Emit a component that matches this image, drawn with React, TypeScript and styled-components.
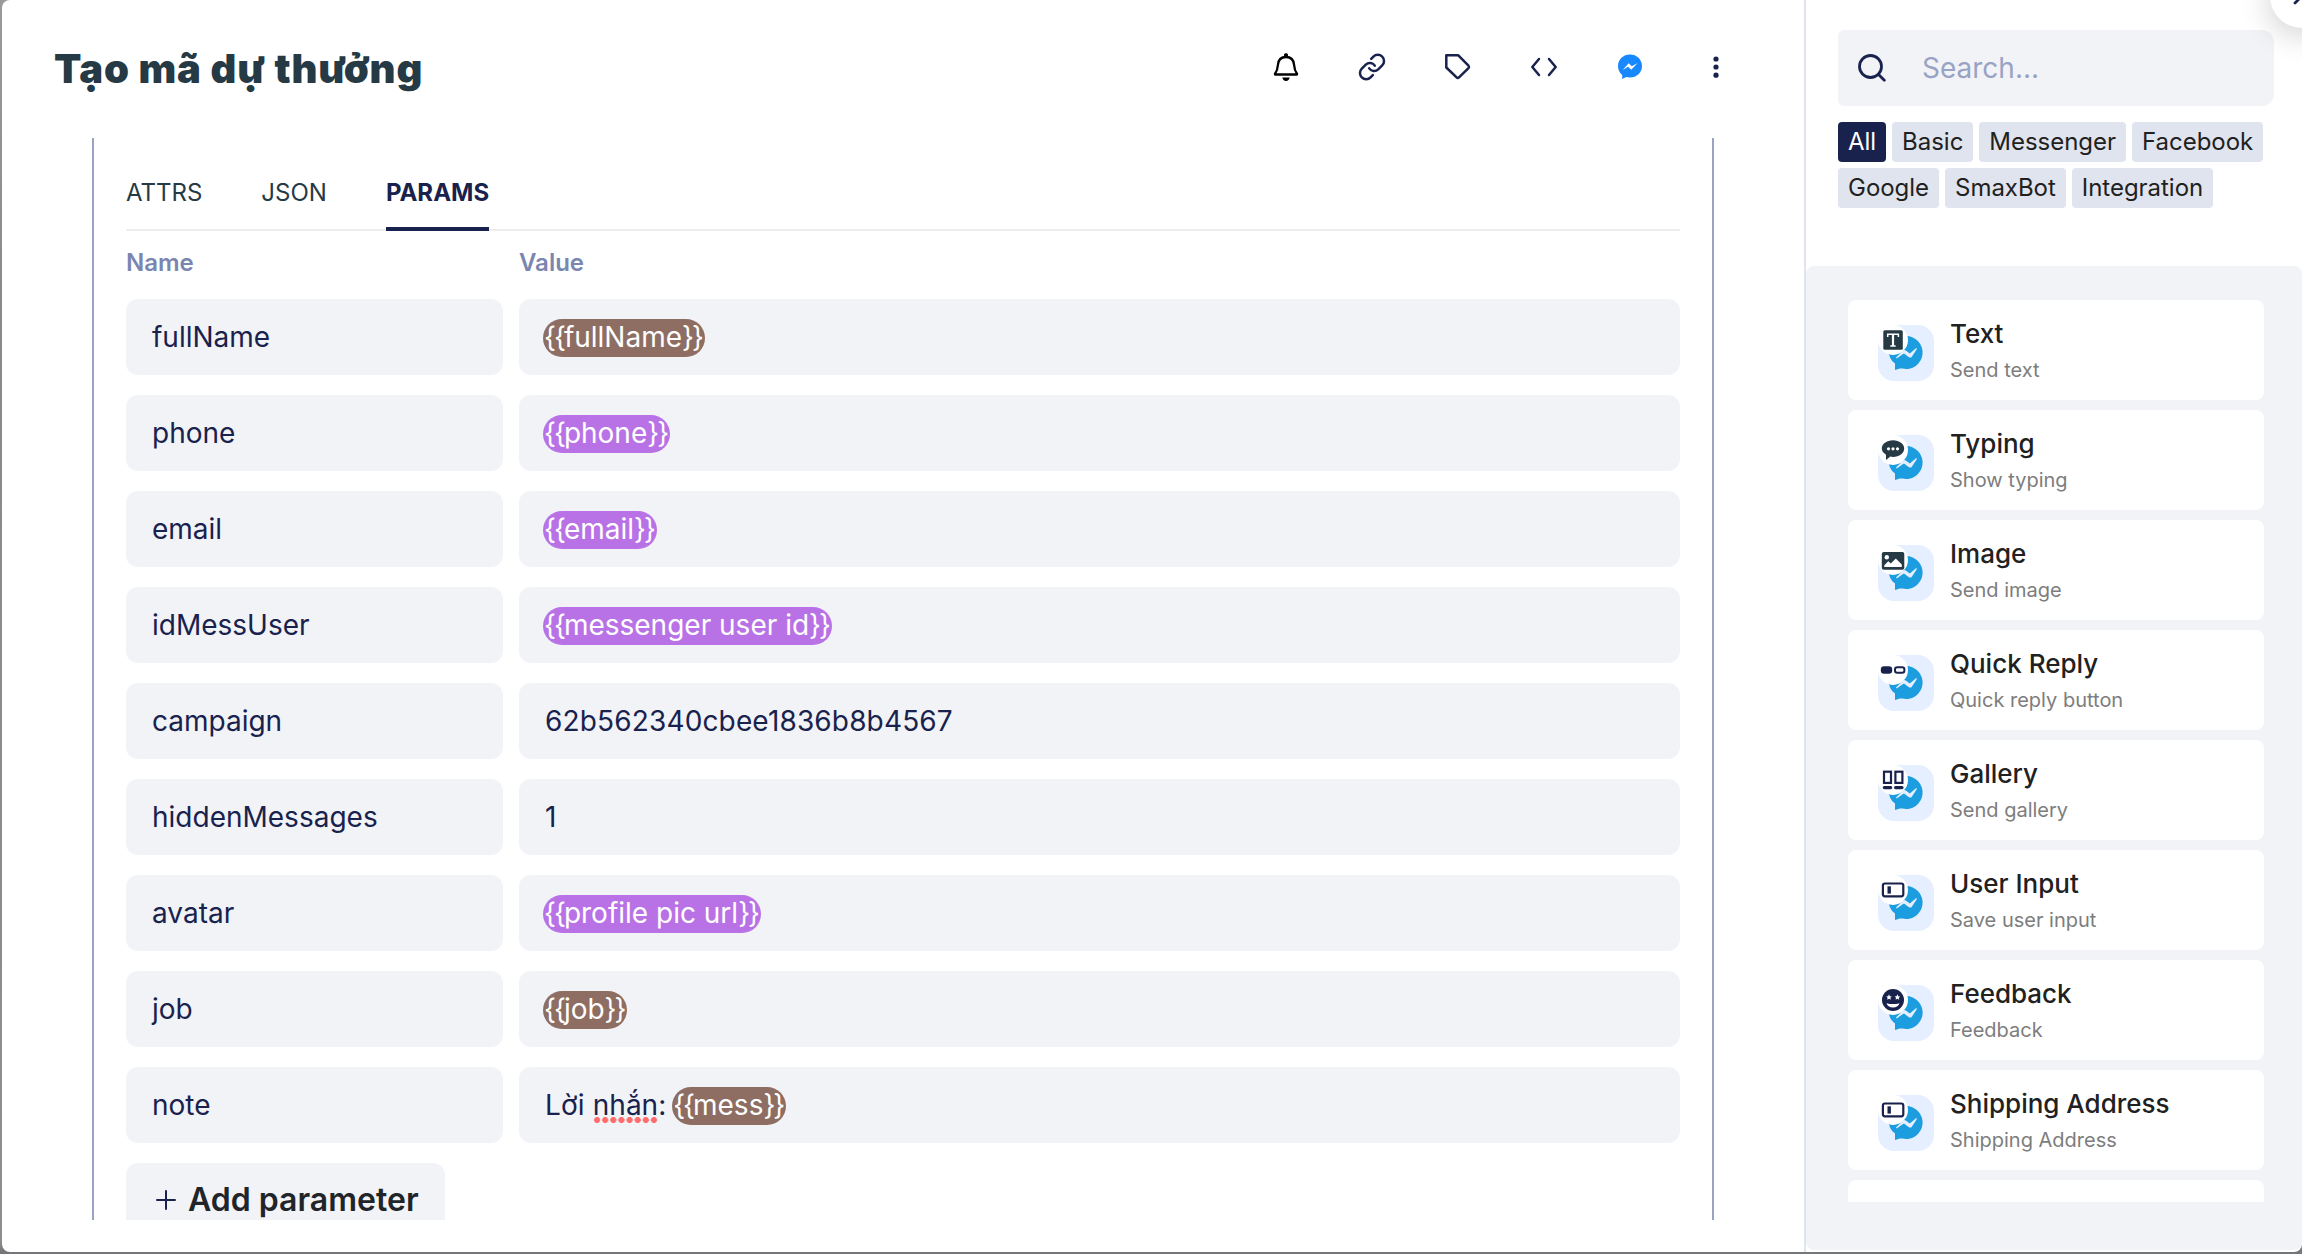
import React from 'react';
import styled, { createGlobalStyle } from 'styled-components';

const Global = createGlobalStyle`
  * { box-sizing: border-box; }
  body { margin: 0; overflow: hidden; font-family: Inter, 'Noto Sans', sans-serif; }
`;

const Backdrop = styled.div`
  width: 100vw;
  height: 1254px;
  padding: 0 0 2px 2px;
  overflow: hidden;
  background: linear-gradient(to bottom, #9a9a9c 0, #8a8a8a 300px, #8e8e8e 1240px, #757679 1252px);
`;

const Modal = styled.div`
  display: flex;
  position: relative;
  height: 1252px;
  background: #fff;
  border-radius: 8px 0 8px 8px;
  overflow: hidden;
`;

const Main = styled.main`
  width: 1802px;
  display: flex;
  flex-direction: column;
`;

const Header = styled.header`
  height: 138px;
  padding: 0 68px 4px 52px;
  display: flex;
  align-items: center;
  justify-content: space-between;
`;

const Title = styled.h1`
  margin: 3px 0 0;
  font-size: 40px;
  line-height: 48px;
  font-weight: 900;
  letter-spacing: 0.8px;
  color: #263a45;
`;

const Actions = styled.div`
  display: flex;
  gap: 46px;
`;

const Action = styled.button`
  border: 0;
  padding: 0;
  background: none;
  width: 40px;
  height: 40px;
  svg { display: block; overflow: visible; }
`;

const Editor = styled.section`
  margin-left: 90px;
  width: 1622px;
  height: 1082px;
  padding: 0 32px;
  border-left: 2px solid #99a3c4;
  border-right: 2px solid #99a3c4;
  overflow: hidden;
`;

const Tabs = styled.nav`
  height: 93px;
  display: flex;
  gap: 59px;
  border-bottom: 2px solid #ececec;
`;

const Tab = styled.div<{ $active?: boolean }>`
  height: 93px;
  padding-top: 40px;
  font-size: 24px;
  line-height: 30px;
  font-weight: ${(p) => (p.$active ? 700 : 400)};
  color: ${(p) => (p.$active ? '#18224d' : '#263a45')};
  border-bottom: ${(p) => (p.$active ? '4px solid #18224d' : '0')};
`;

const Row = styled.div`
  display: grid;
  grid-template-columns: 377px 1fr;
  column-gap: 16px;
`;

const Heads = styled(Row)`
  height: 68px;
  padding-top: 16px;
  font-size: 24px;
  line-height: 32px;
  font-weight: 600;
  color: #7a86af;
`;

const Rows = styled.div`
  display: grid;
  gap: 20px;
`;

const Field = styled.div`
  height: 76px;
  padding: 0 26px;
  display: flex;
  align-items: center;
  border-radius: 12px;
  background: #f1f3f7;
  color: #18224d;
  font-size: 28px;
  line-height: 38px;
  white-space: pre;
`;

const Code = styled.span`
  letter-spacing: 0.15px;
`;

const Chip = styled.span<{ $color: string }>`
  height: 38px;
  line-height: 36px;
  margin: 2px -2px 0;
  padding: 0 3px 0 1px;
  border-radius: 19px;
  color: #fff;
  background: ${(p) => p.$color};
`;

const Brace = styled.span`
  letter-spacing: -2px;
`;

const Misspelt = styled.span`
  height: 38px;
  background-image: radial-gradient(circle at center, #ff6b6b 2.7px, transparent 3.3px);
  background-position: 0 calc(100% - 1px);
  background-size: 8px 6px;
  background-repeat: round no-repeat;
`;

const AddButton = styled.button`
  margin-top: 20px;
  width: 319px;
  height: 76px;
  padding: 0 0 2px 30px;
  border: 0;
  border-radius: 12px;
  background: #f1f3f7;
  display: flex;
  align-items: center;
  gap: 12px;
  font: 600 32px/40px Inter, sans-serif;
  color: #212529;
  white-space: nowrap;
`;

const Sidebar = styled.aside`
  width: 498px;
  border-left: 2px solid #e0e4ee;
`;

const SidebarTop = styled.div`
  height: 266px;
  padding: 30px 28px 0 32px;
`;

const SearchBox = styled.div`
  height: 76px;
  padding-left: 20px;
  display: flex;
  align-items: center;
  gap: 36px;
  border-radius: 6px 12px 12px 6px;
  background: #f1f3f7;
  font-size: 28px;
  color: #99a3c4;
`;

const Tags = styled.div`
  margin-top: 16px;
  display: flex;
  flex-wrap: wrap;
  gap: 6px;
`;

const Tag = styled.span<{ $active?: boolean }>`
  height: 40px;
  padding: 0 10px;
  border-radius: 4px;
  font-size: 24px;
  line-height: 39px;
  letter-spacing: -0.03px;
  color: ${(p) => (p.$active ? '#fff' : '#212121')};
  background: ${(p) => (p.$active ? '#18224d' : '#e0e4ee')};
`;

const Panel = styled.div`
  height: 984px;
  padding: 34px 38px 0 42px;
  border-radius: 8px;
  background: #f1f3f7;
`;

const CardList = styled.div`
  height: 902px;
  overflow: hidden;
`;

const Card = styled.div`
  height: 100px;
  margin-bottom: 10px;
  padding: 0 30px;
  border-radius: 8px;
  background: #fff;
  display: flex;
  gap: 16px;
`;

const CardIcon = styled.svg`
  margin-top: 25px;
  width: 56px;
  height: 56px;
  flex: none;
`;

const CardTitle = styled.div`
  margin-top: 18px;
  font-size: 26px;
  line-height: 32px;
  font-weight: 500;
  color: #212121;
  white-space: nowrap;
`;

const CardHint = styled.div`
  margin-top: 8px;
  font-size: 20px;
  line-height: 24px;
  color: #7d7d7d;
`;

const CloseButton = styled.div`
  position: absolute;
  top: -36px;
  right: -32px;
  width: 64px;
  height: 64px;
  border-radius: 50%;
  background: #fff;
  box-shadow: 0 6px 32px rgba(0, 0, 0, 0.2);
  svg { position: absolute; left: 22px; top: 22px; }
`;

const NAVY = '#18224d';
const SLATE = '#263a45';
const BROWN = '#8e6e62';
const PURPLE = '#b872e6';

type Param = { name: string; text?: string; typo?: string; chip?: string; color?: string };

const params: Param[] = [
  { name: 'fullName', chip: 'fullName', color: BROWN },
  { name: 'phone', chip: 'phone', color: PURPLE },
  { name: 'email', chip: 'email', color: PURPLE },
  { name: 'idMessUser', chip: 'messenger user id', color: PURPLE },
  { name: 'campaign', text: '62b562340cbee1836b8b4567' },
  { name: 'hiddenMessages', text: '1' },
  { name: 'avatar', chip: 'profile pic url', color: PURPLE },
  { name: 'job', chip: 'job', color: BROWN },
  { name: 'note', text: 'Lời ', typo: 'nhắn', chip: 'mess', color: BROWN },
];

const Star = ({ x }: { x: number }) => (
  <path
    d="M0-2.9.85-1 2.8-.8 1.4.6 1.8 2.6 0 1.6-1.8 2.6-1.4.6-2.8-.8-.85-1z"
    transform={`translate(${x} 12.2)`}
    fill="#fff"
  />
);

const badges: Record<string, React.ReactNode> = {
  text: (
    <>
      <rect x="5.3" y="5.300" width="19.500" height="19.500" rx="1.5" fill={SLATE} />
      <path d="M9.700 12V9.300h10.700V12M15 9.300V21M12.300 21h5.400" fill="none" stroke="#fff" strokeWidth="1.500" />
      <path d="M15 9.300V21" stroke="#fff" strokeWidth="2.200" />
    </>
  ),
  typing: (
    <>
      <path d="M15 5.300c6.300 0 11.200 3.600 11.200 8.300s-4.900 8.300-11.200 8.300c-1 0-1.900-.1-2.800-.3-1.200.9-2.600 2.300-4.200 3.400v-5.300c-2.600-1.500-4.200-3.600-4.200-6.100 0-4.700 4.900-8.300 11.200-8.300z" fill={SLATE} />
      <circle cx="10.500" cy="13.800" r="1.600" fill="#fff" />
      <circle cx="15" cy="13.800" r="1.600" fill="#fff" />
      <circle cx="19.500" cy="13.800" r="1.600" fill="#fff" />
    </>
  ),
  image: (
    <>
      <rect x="3.800" y="7" width="22.500" height="17.800" rx="2" fill={SLATE} />
      <circle cx="8.800" cy="12.300" r="2.200" fill="#fff" />
      <path d="M6.300 22v-1.800l4-4 2.500 2.300 5-5 6 6V22z" fill="#fff" />
    </>
  ),
  quick: (
    <>
      <rect x="2.800" y="11.300" width="11.400" height="7.400" rx="3.200" fill={NAVY} />
      <rect x="17" y="12.300" width="9.400" height="5.400" rx="2.300" fill="#fff" stroke={NAVY} strokeWidth="2" />
    </>
  ),
  gallery: (
    <>
      <rect x="6" y="6.700" width="7" height="11.200" fill="none" stroke={NAVY} strokeWidth="2.200" />
      <rect x="17.400" y="6.700" width="7" height="11.200" fill="none" stroke={NAVY} strokeWidth="2.200" />
      <path d="M6.300 22.600H12.700M17.600 22.600H24" stroke={NAVY} strokeWidth="3.200" strokeLinecap="round" />
    </>
  ),
  input: (
    <>
      <rect x="4.900" y="8.500" width="20.400" height="12.800" rx="2" fill="none" stroke={NAVY} strokeWidth="2.200" />
      <rect x="9.500" y="11.300" width="3.400" height="7.300" fill={NAVY} />
    </>
  ),
  feedback: (
    <>
      <circle cx="15" cy="15" r="11" fill={NAVY} />
      <Star x={11} />
      <Star x={19.4} />
      <path d="M8.600 18.200c4 1.200 8.800 1.200 12.800 0-.4 2.700-2.900 4.200-6.400 4.200s-6-1.500-6.400-4.200z" fill="#fff" />
    </>
  ),
};

const cards = [
  ['Text', 'Send text', 'text'],
  ['Typing', 'Show typing', 'typing'],
  ['Image', 'Send image', 'image'],
  ['Quick Reply', 'Quick reply button', 'quick'],
  ['Gallery', 'Send gallery', 'gallery'],
  ['User Input', 'Save user input', 'input'],
  ['Feedback', 'Feedback', 'feedback'],
  ['Shipping Address', 'Shipping Address', 'input'],
];

const BlockIcon = ({ kind }: { kind: string }) => (
  <CardIcon viewBox="0 0 56 56">
    <rect width="56" height="56" rx="16" fill="#e5efff" />
    <path d="M28 11a16.500 16.500 0 1 1-3.500 32.600c-2.500-.4-4.500.3-7.500 1.400v-6.500C13 35.500 11 32 11 27.500 11 18 18.500 11 28 11z" fill="#1b9de0" />
    <path d="M18 32.500 25 25.800c1-1 1.800-1 2.800-.2l4 3L38.600 22.800v1.600L34 31.400c-1 1.500-2 1.500-3.400.5L27 29.200c-.8-.6-1.400-.6-2.300 0l-6 4.200z" fill="#e5efff" />
    <circle cx="15" cy="15" r="15" fill="#fff" />
    {badges[kind]}
  </CardIcon>
);

const line = { fill: 'none', stroke: NAVY, strokeWidth: 2.5, strokeLinecap: 'round', strokeLinejoin: 'round' } as const;

const headerIcons: React.ReactNode[] = [
  <>
    <path d="M9 27.500h22v-.8c-2-2.500-2.600-4.200-2.900-8.700-.4-5.300-3.100-8-8.100-8s-7.700 2.700-8.100 8c-.3 4.500-.9 6.200-2.900 8.700z" fill="none" stroke="#000" strokeWidth="2.300" strokeLinejoin="round" />
    <path d="M18 10V7.700C18 5.700 22 5.700 22 7.700V10z" fill="#000" />
    <path d="M16.300 30.500h7.400c-.5 2.300-1.700 3.500-3.700 3.500s-3.200-1.200-3.700-3.500z" fill="#000" />
  </>,
  <g {...line}>
    <path d="M20.800 28.200 18.600 30.400A6 6 0 0 1 9.800 21.600L13.800 17.600A6 6 0 0 1 22.800 18.600" />
    <path d="M19.200 11.800 21.400 9.600A6 6 0 0 1 30.200 18.400L26.200 22.400A6 6 0 0 1 17.200 21.400" />
  </g>,
  <path d="M8.300 8.300h12L30.500 18.700q1 1.200 0 2.400L21 30.400q-1.200 1.200-2.400 0L8.300 20.500z" {...line} />,
  <path d="M15 12 8.300 20 15 28M25 12 31.700 20 25 28" {...line} />,
  <>
    <path d="M20 7.500c6.800 0 12 4.900 12 11.500s-5.200 11.500-12 11.500c-1.300 0-2.600-.2-3.800-.5L12.200 32v-4C9.600 25.800 8 22.700 8 19 8 12.400 13.200 7.500 20 7.500z" fill="#1888ff" />
    <path d="M12.600 23 18.700 16.200 21.800 19.200 27.400 16.200 21.300 22.800 18.100 19.800z" fill="#fff" />
  </>,
  <g fill={NAVY}>
    <circle cx="20" cy="12" r="2.600" />
    <circle cx="20" cy="20" r="2.600" />
    <circle cx="20" cy="28.200" r="2.600" />
  </g>,
];

export default function App() {
  return (
    <>
      <Global />
      <Backdrop>
        <Modal>
          <Main>
            <Header>
              <Title>Tạo mã dự thưởng</Title>
              <Actions>
                {headerIcons.map((icon, i) => (
                  <Action key={i}>
                    <svg width="40" height="40" viewBox="0 0 40 40">{icon}</svg>
                  </Action>
                ))}
              </Actions>
            </Header>
            <Editor>
              <Tabs>
                <Tab>ATTRS</Tab>
                <Tab>JSON</Tab>
                <Tab $active>PARAMS</Tab>
              </Tabs>
              <Heads>
                <span>Name</span>
                <span>Value</span>
              </Heads>
              <Rows>
                {params.map((p) => (
                  <Row key={p.name}>
                    <Field>{p.name}</Field>
                    <Field>
                      {p.text && <Code>{p.text}</Code>}
                      {p.typo && <><Misspelt>{p.typo}</Misspelt><span>: </span></>}
                      {p.chip && (
                        <Chip $color={p.color!}>
                          <Brace>{'{{'}</Brace>{p.chip}<Brace>{'}}'}</Brace>
                        </Chip>
                      )}
                    </Field>
                  </Row>
                ))}
              </Rows>
              <AddButton>
                <svg width="20" height="20" viewBox="0 0 20 20">
                  <path d="M10 1v18M1 10h18" {...line} strokeWidth={2} />
                </svg>
                Add parameter
              </AddButton>
            </Editor>
          </Main>
          <Sidebar>
            <SidebarTop>
              <SearchBox>
                <svg width="28" height="28" viewBox="0 0 28 28">
                  <circle cx="12.500" cy="12.500" r="11" {...line} strokeWidth={2.800} />
                  <path d="M20.500 20.500 26.300 26.300" {...line} strokeWidth={2.800} />
                </svg>
                <span>Search...</span>
              </SearchBox>
              <Tags>
                {['All', 'Basic', 'Messenger', 'Facebook', 'Google', 'SmaxBot', 'Integration'].map((t) => (
                  <Tag key={t} $active={t === 'All'}>{t}</Tag>
                ))}
              </Tags>
            </SidebarTop>
            <Panel>
              <CardList>
                {cards.map(([title, hint, kind]) => (
                  <Card key={title}>
                    <BlockIcon kind={kind} />
                    <div>
                      <CardTitle>{title}</CardTitle>
                      <CardHint>{hint}</CardHint>
                    </div>
                  </Card>
                ))}
                <Card />
              </CardList>
            </Panel>
          </Sidebar>
          <CloseButton>
            <svg width="20" height="20" viewBox="0 0 20 20">
              <path d="M3 3 17 17M17 3 3 17" {...line} strokeWidth={2.800} />
            </svg>
          </CloseButton>
        </Modal>
      </Backdrop>
    </>
  );
}
